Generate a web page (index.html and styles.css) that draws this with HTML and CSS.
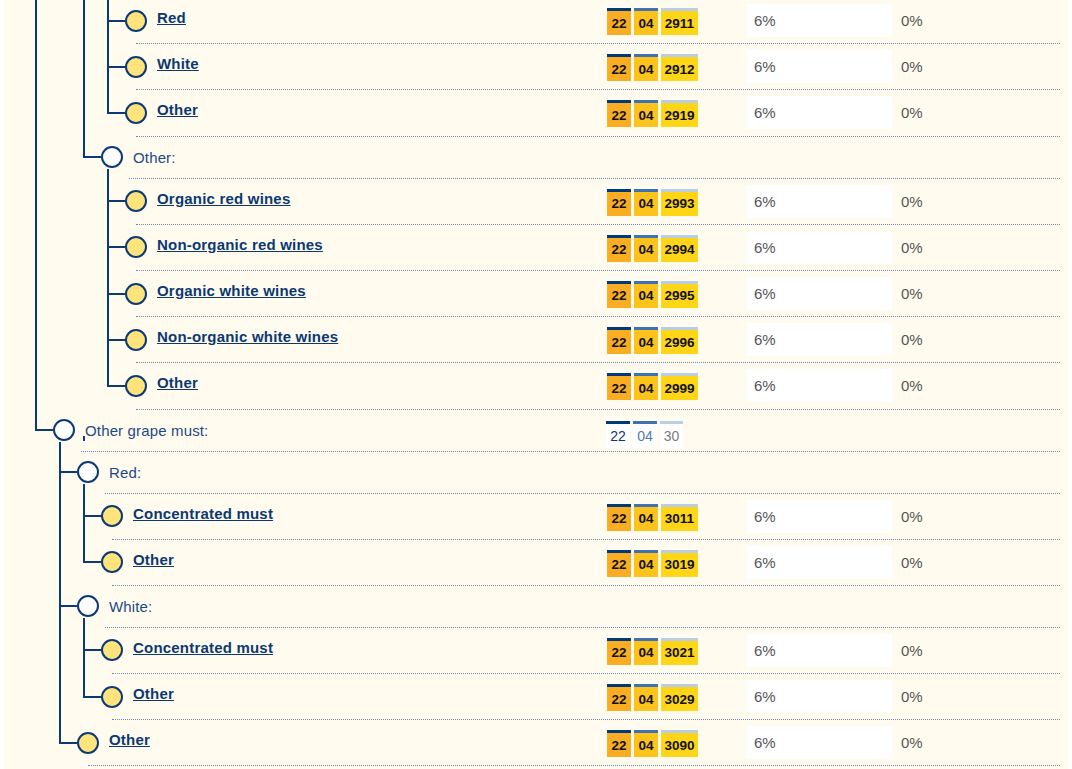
FILE: index.html
```html
<!DOCTYPE html>
<html lang="en">
<head>
<meta charset="utf-8">
<title>Tariff tree</title>
<link rel="stylesheet" href="styles.css">
</head>
<body>
<div class="page">
<ul class="tree">
  <li class="cont">
    <ul>
      <li class="cont noline">
        <ul>
          <li class="cont">
            <ul>
              <li class="leaf"><div class="row leaf-row"><span class="node"></span><span class="label"><a href="#">Red</a></span><span class="code"><span class="seg s1">22</span><span class="seg s2">04</span><span class="seg s3">2911</span></span><span class="rate">6%</span><span class="zero">0%</span></div></li>
              <li class="leaf"><div class="row leaf-row"><span class="node"></span><span class="label"><a href="#">White</a></span><span class="code"><span class="seg s1">22</span><span class="seg s2">04</span><span class="seg s3">2912</span></span><span class="rate">6%</span><span class="zero">0%</span></div></li>
              <li class="leaf"><div class="row leaf-row"><span class="node"></span><span class="label"><a href="#">Other</a></span><span class="code"><span class="seg s1">22</span><span class="seg s2">04</span><span class="seg s3">2919</span></span><span class="rate">6%</span><span class="zero">0%</span></div></li>
            </ul>
          </li>
          <li class="head">
            <div class="row head-row"><span class="node"></span><span class="label">Other:</span></div>
            <ul>
              <li class="leaf"><div class="row leaf-row"><span class="node"></span><span class="label"><a href="#">Organic red wines</a></span><span class="code"><span class="seg s1">22</span><span class="seg s2">04</span><span class="seg s3">2993</span></span><span class="rate">6%</span><span class="zero">0%</span></div></li>
              <li class="leaf"><div class="row leaf-row"><span class="node"></span><span class="label"><a href="#">Non-organic red wines</a></span><span class="code"><span class="seg s1">22</span><span class="seg s2">04</span><span class="seg s3">2994</span></span><span class="rate">6%</span><span class="zero">0%</span></div></li>
              <li class="leaf"><div class="row leaf-row"><span class="node"></span><span class="label"><a href="#">Organic white wines</a></span><span class="code"><span class="seg s1">22</span><span class="seg s2">04</span><span class="seg s3">2995</span></span><span class="rate">6%</span><span class="zero">0%</span></div></li>
              <li class="leaf"><div class="row leaf-row"><span class="node"></span><span class="label"><a href="#">Non-organic white wines</a></span><span class="code"><span class="seg s1">22</span><span class="seg s2">04</span><span class="seg s3">2996</span></span><span class="rate">6%</span><span class="zero">0%</span></div></li>
              <li class="leaf"><div class="row leaf-row"><span class="node"></span><span class="label"><a href="#">Other</a></span><span class="code"><span class="seg s1">22</span><span class="seg s2">04</span><span class="seg s3">2999</span></span><span class="rate">6%</span><span class="zero">0%</span></div></li>
            </ul>
          </li>
        </ul>
      </li>
    </ul>
  </li>
  <li class="head">
    <div class="row head-row"><span class="node"></span><span class="label"><span class="tick"></span>Other grape must:</span><span class="code plain"><span class="seg s1">22</span><span class="seg s2">04</span><span class="seg s3">30</span></span><span class="spacer"></span></div>
    <ul>
      <li class="head">
        <div class="row head-row"><span class="node"></span><span class="label">Red:</span></div>
        <ul>
          <li class="leaf"><div class="row leaf-row"><span class="node"></span><span class="label"><a href="#">Concentrated must</a></span><span class="code"><span class="seg s1">22</span><span class="seg s2">04</span><span class="seg s3">3011</span></span><span class="rate">6%</span><span class="zero">0%</span></div></li>
          <li class="leaf"><div class="row leaf-row"><span class="node"></span><span class="label"><a href="#">Other</a></span><span class="code"><span class="seg s1">22</span><span class="seg s2">04</span><span class="seg s3">3019</span></span><span class="rate">6%</span><span class="zero">0%</span></div></li>
        </ul>
      </li>
      <li class="head">
        <div class="row head-row"><span class="node"></span><span class="label">White:</span></div>
        <ul>
          <li class="leaf"><div class="row leaf-row"><span class="node"></span><span class="label"><a href="#">Concentrated must</a></span><span class="code"><span class="seg s1">22</span><span class="seg s2">04</span><span class="seg s3">3021</span></span><span class="rate">6%</span><span class="zero">0%</span></div></li>
          <li class="leaf"><div class="row leaf-row"><span class="node"></span><span class="label"><a href="#">Other</a></span><span class="code"><span class="seg s1">22</span><span class="seg s2">04</span><span class="seg s3">3029</span></span><span class="rate">6%</span><span class="zero">0%</span></div></li>
        </ul>
      </li>
      <li class="leaf"><div class="row leaf-row"><span class="node"></span><span class="label"><a href="#">Other</a></span><span class="code"><span class="seg s1">22</span><span class="seg s2">04</span><span class="seg s3">3090</span></span><span class="rate">6%</span><span class="zero">0%</span></div></li>
    </ul>
  </li>
</ul>
</div>
</body>
</html>
```

FILE: styles.css
```css
* { box-sizing: border-box; }

html, body {
  margin: 0;
  background: #fffef8;
  font-family: "Liberation Sans", Arial, sans-serif;
}

.page {
  margin: 0 4px;
  background: #fffcef;
  min-height: 769px;
  overflow: hidden;
}

ul {
  list-style: none;
  margin: 0;
  padding: 0;
}

.tree {
  margin: -2px 8px 0 31px;
}

.tree ul {
  margin-left: 24px;
}

li {
  position: relative;
}

li::before {
  content: "";
  position: absolute;
  left: 0;
  top: -10px;
  bottom: 0;
  width: 2px;
  background: #0d3a76;
}

li.leaf:last-child::before {
  bottom: auto;
  height: 33.6px;
}

li.head:last-child::before {
  bottom: auto;
  height: 31.5px;
}

li.noline::before {
  display: none;
}

.row {
  display: flex;
  align-items: center;
  border-bottom: 1px dotted #7488b0;
}

.leaf-row {
  height: 46.2px;
  margin-left: 29px;
}

.head-row {
  height: 42px;
  margin-left: 46px;
}

.node {
  flex: none;
  position: relative;
  z-index: 1;
  width: 22px;
  height: 22px;
  border: 2px solid #0d3a76;
  border-radius: 50%;
  background: #ffe47e;
}

.leaf-row .node {
  margin-left: -11px;
}

.head-row .node {
  margin-left: -28px;
  background: #ffffff;
}

.node::before {
  content: "";
  position: absolute;
  left: -20px;
  top: 8px;
  width: 18px;
  height: 2px;
  background: #0d3a76;
}

.label {
  flex: 1;
  min-width: 0;
  align-self: flex-start;
  margin-left: 10px;
  font-size: 15px;
  line-height: 17px;
  white-space: nowrap;
}

.leaf-row .label {
  padding-top: 11px;
  letter-spacing: 0.2px;
}

.head-row .label {
  padding-top: 12px;
  color: #1d4a86;
  letter-spacing: 0.15px;
}

.label a {
  color: #0c3872;
  font-weight: bold;
  text-decoration: underline;
}

.tick {
  display: inline-block;
  width: 2px;
  height: 5px;
  margin-left: -2px;
  background: #0d3a76;
  vertical-align: -5px;
}

.code {
  flex: none;
  width: 141px;
  align-self: flex-start;
  display: flex;
  gap: 3px;
}

.leaf-row .code {
  margin-top: 10px;
  padding-left: 1px;
}

.head-row .code {
  margin-top: 11px;
}

.seg {
  height: 27px;
  width: 24px;
  border-top: 3px solid;
  display: flex;
  align-items: center;
  justify-content: center;
  font-size: 13.5px;
  font-weight: bold;
  color: #111111;
}

.s1 {
  border-top-color: #003a7a;
  background: #f8ad22;
}

.s2 {
  border-top-color: #3f72b5;
  background: #fdc31d;
}

.s3 {
  border-top-color: #b9cde5;
  background: #ffd517;
  width: 37px;
}

.plain .seg {
  background: #ffffff;
  font-weight: normal;
  font-size: 14px;
}

.plain .s1 { color: #0c3872; }
.plain .s2 { color: #4a7ab8; }
.plain .s3 { color: #7a7a7a; width: 23px; }

.spacer {
  flex: none;
  width: 313px;
}

.rate {
  flex: none;
  width: 145px;
  height: 33px;
  align-self: flex-start;
  margin-top: 6px;
  padding-left: 7px;
  display: flex;
  align-items: center;
  background: #ffffff;
  font-size: 15px;
  color: #555555;
}

.zero {
  flex: none;
  width: 168px;
  height: 33px;
  align-self: flex-start;
  margin-top: 6px;
  padding-left: 9px;
  display: flex;
  align-items: center;
  font-size: 15px;
  color: #555555;
}
```
